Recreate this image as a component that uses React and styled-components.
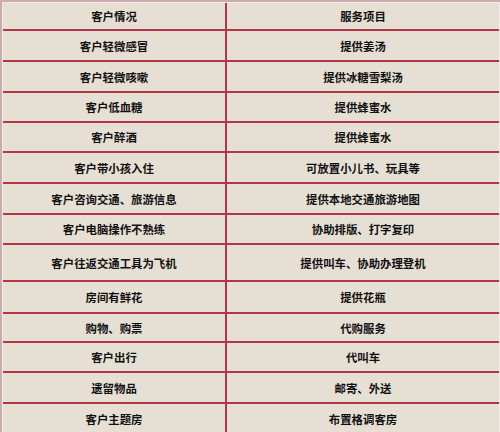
import React from "react";
import styled, { createGlobalStyle } from "styled-components";

const Global = createGlobalStyle`
  html, body { margin: 0; padding: 0; background: #cfa9ad; }
  body { width: 500px; height: 432px; overflow: hidden; }
`;

const Frame = styled.div`
  width: 500px;
  box-sizing: border-box;
  padding: 2px 0 0 2px;
  background: #cfa9ad;
`;

const Table = styled.div`
  border-left: 1px solid #f1ede6;
  border-top: 1px solid #f1ede6;
  border-right: 1px solid #f1ede6;
  background: #e6e0d4;
`;

const Row = styled.div`
  display: grid;
  grid-template-columns: 222px 1fr;
  height: ${(p) => p.$h}px;
  box-sizing: border-box;
  border-bottom: 2px solid #b33647;
`;

const Cell = styled.div`
  display: flex;
  align-items: center;
  justify-content: center;
  font-family: "Noto Sans CJK SC", "Noto Sans", sans-serif;
  font-weight: 700;
  font-size: 11.4px;
  color: #111;
  white-space: nowrap;
  & + & {
    border-left: 2px solid #b33647;
  }
`;

const rows = [
  ["客户情况", "服务项目", 28],
  ["客户轻微感冒", "提供姜汤", 31],
  ["客户轻微咳嗽", "提供冰糖雪梨汤", 31],
  ["客户低血糖", "提供蜂蜜水", 30],
  ["客户醉酒", "提供蜂蜜水", 30],
  ["客户带小孩入住", "可放置小儿书、玩具等", 31],
  ["客户咨询交通、旅游信息", "提供本地交通旅游地图", 31],
  ["客户电脑操作不熟练", "协助排版、打字复印", 30],
  ["客户往返交通工具为飞机", "提供叫车、协助办理登机", 37],
  ["房间有鲜花", "提供花瓶", 32],
  ["购物、购票", "代购服务", 29],
  ["客户出行", "代叫车", 30],
  ["遗留物品", "邮寄、外送", 31],
  ["客户主题房", "布置格调客房", 31],
];

export default function App() {
  return (
    <>
      <Global />
      <Frame>
        <Table>
          {rows.map(([a, b, h]) => (
            <Row key={a + b} $h={h}>
              <Cell>{a}</Cell>
              <Cell>{b}</Cell>
            </Row>
          ))}
        </Table>
      </Frame>
    </>
  );
}
